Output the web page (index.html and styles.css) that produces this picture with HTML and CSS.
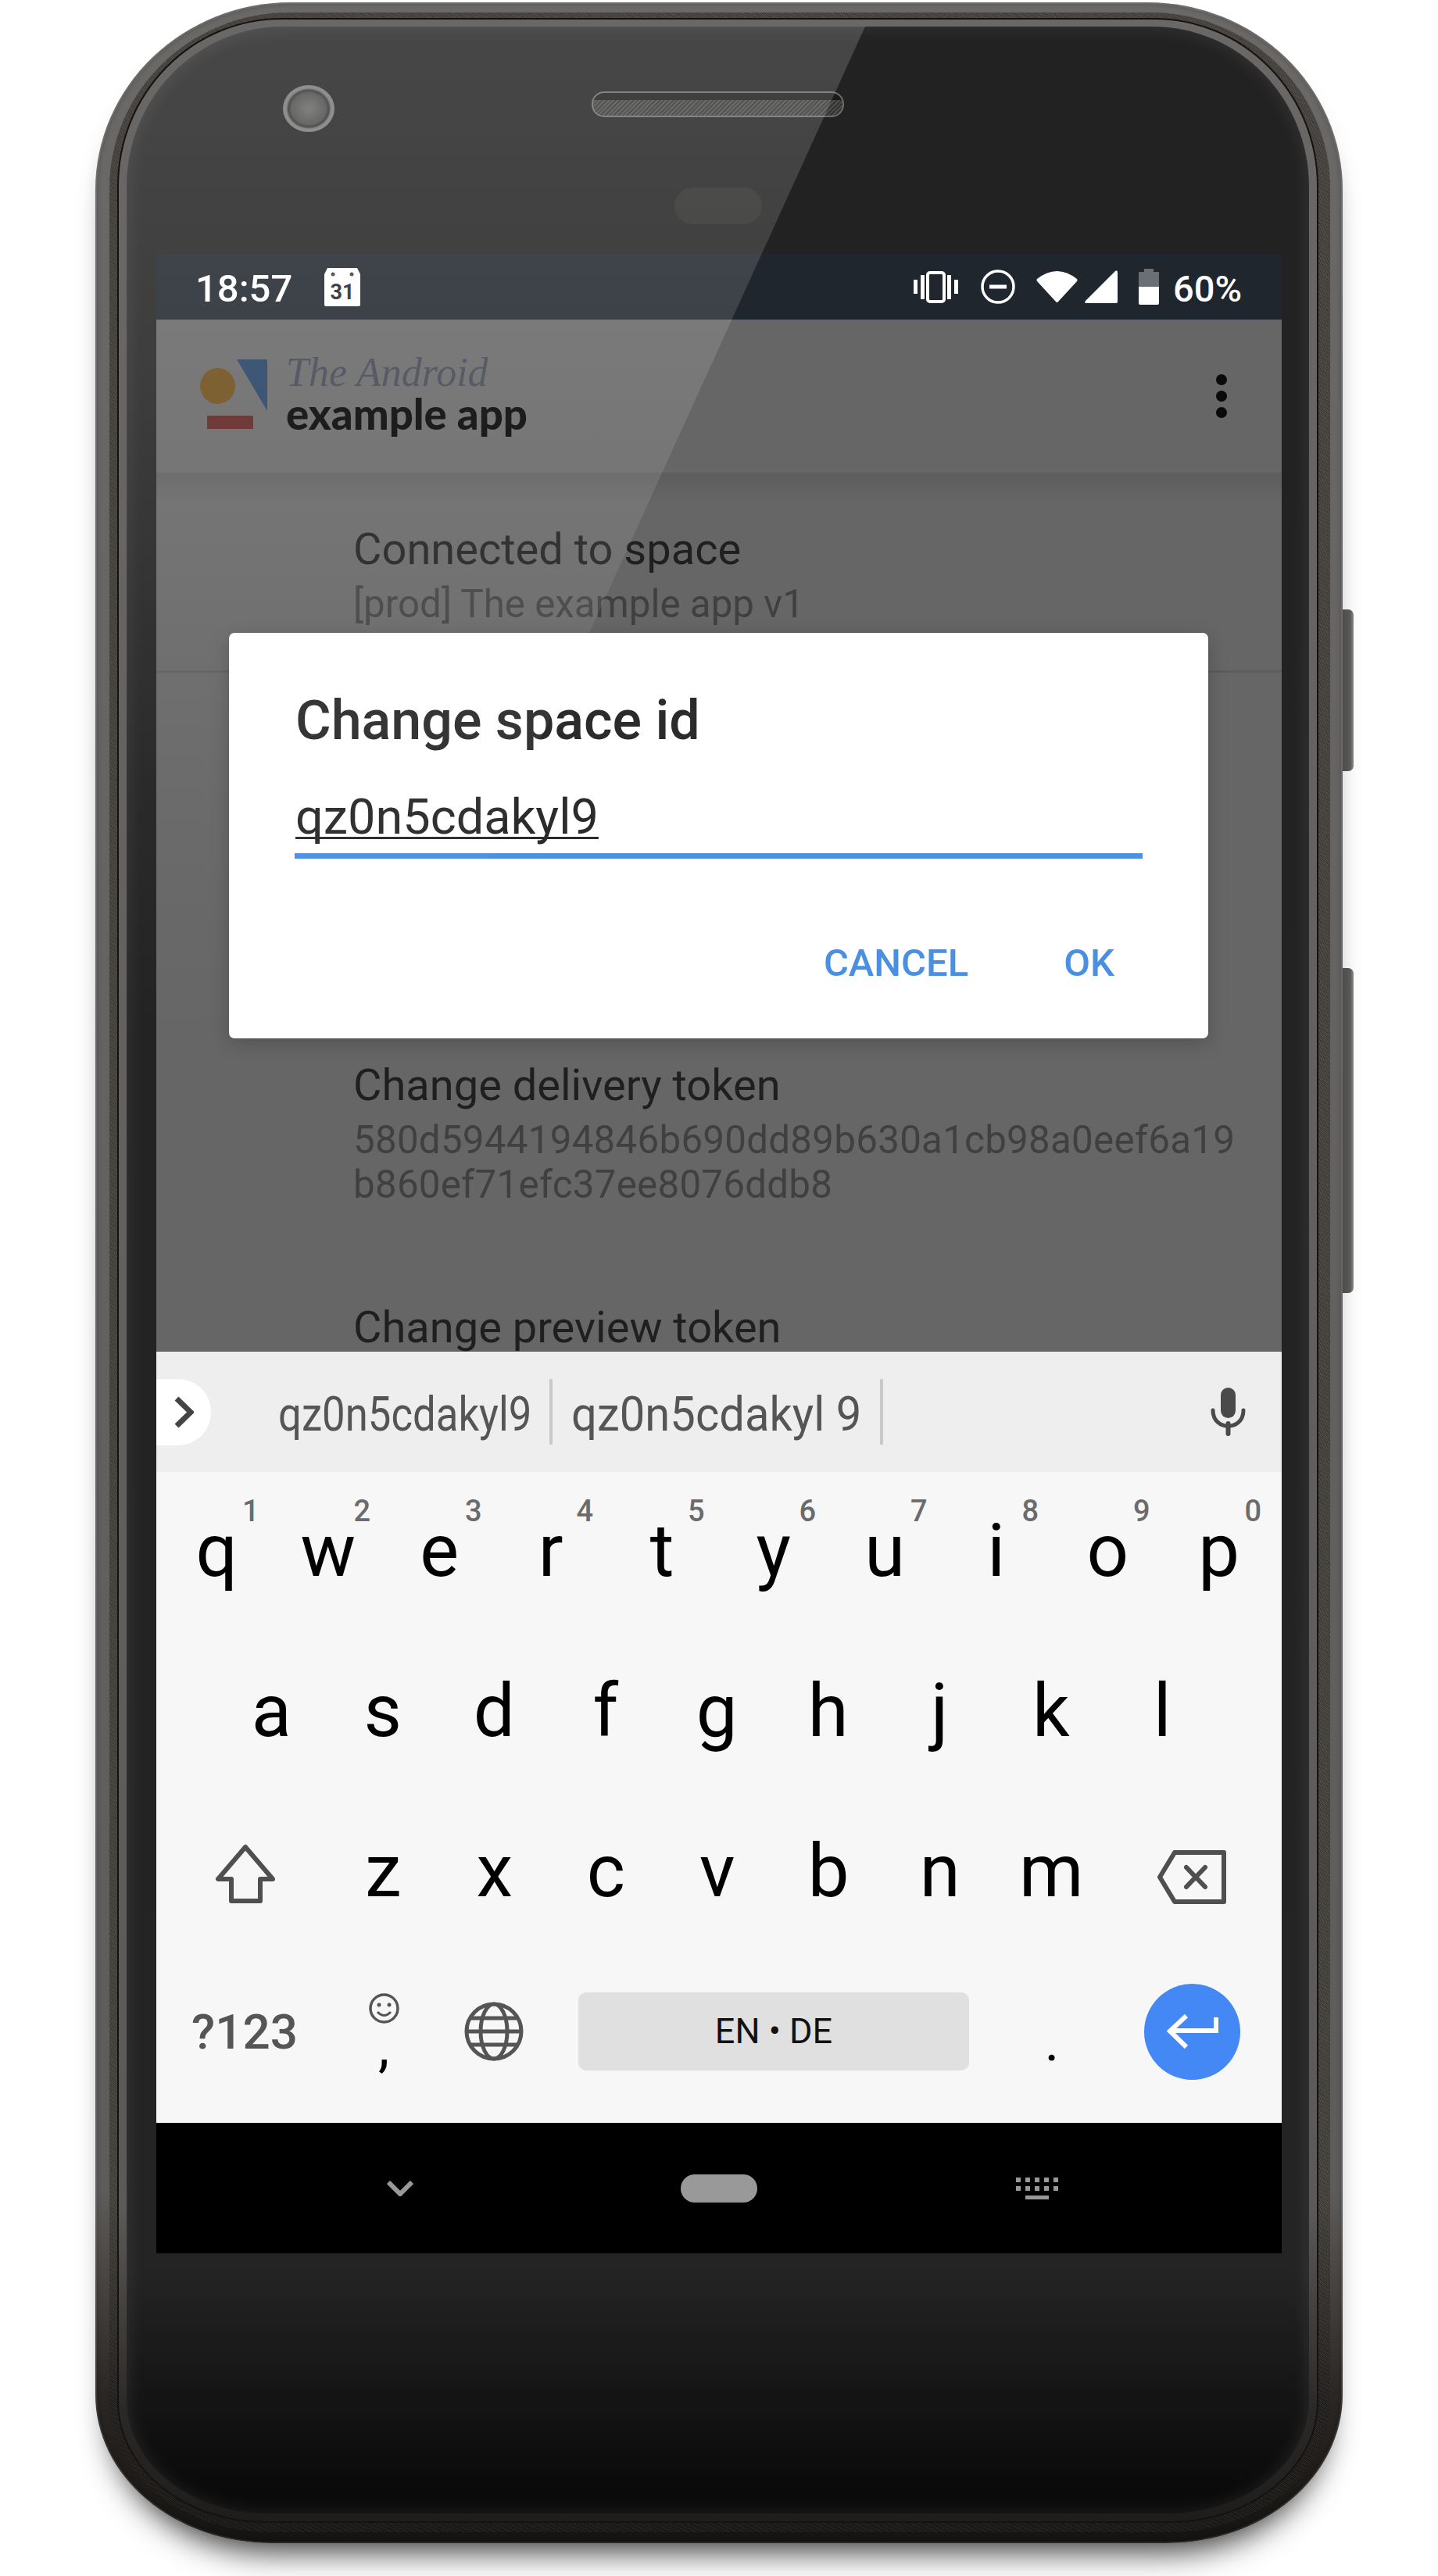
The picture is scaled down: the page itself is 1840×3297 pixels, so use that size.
FILE: index.html
```html
<!DOCTYPE html>
<html lang="en">
<head>
    <meta charset="UTF-8">
    <title>The Android example app</title>
    <link rel="stylesheet" href="styles.css">
</head>
<body>

<div class="device">
    <div class="phone">
        <div class="phone-band">
            <div class="glass-edge">
                <div class="glass-face">

                    <div class="bezel-top">
                        <div class="camera"></div>
                        <div class="bezel-center">
                            <div class="speaker"></div>
                            <div class="sensor"></div>
                        </div>
                    </div>

                    <div class="screen">
                        <div class="status">
                            <span class="time">18:57</span>
                            <svg class="ic-cal" width="46" height="49" viewBox="0 0 46 49">
                                <path d="M4 0H42L46 8V47Q46 49 44 49H2Q0 49 0 47V8Z" fill="#fff"/>
                                <circle cx="11" cy="8" r="2.5" fill="#3d4349"/>
                                <circle cx="35" cy="8" r="2.5" fill="#3d4349"/>
                                <text x="23" y="40" text-anchor="middle" class="cal-num">31</text>
                            </svg>
                            <span class="status-gap"></span>
                            <svg class="ic-vib" width="57" height="41" viewBox="0 0 57 41" fill="#fff">
                                <rect x="18" y="2" width="21" height="37" rx="3" fill="none" stroke="#fff" stroke-width="4"/>
                                <rect x="0" y="11" width="5" height="18"/>
                                <rect x="9" y="5" width="5" height="31"/>
                                <rect x="43" y="5" width="5" height="31"/>
                                <rect x="52" y="11" width="5" height="18"/>
                            </svg>
                            <svg class="ic-dnd" width="44" height="44" viewBox="0 0 44 44">
                                <circle cx="22" cy="22" r="20" fill="none" stroke="#fff" stroke-width="3.5"/>
                                <rect x="11" y="19.5" width="22" height="5" fill="#fff"/>
                            </svg>
                            <svg class="ic-wifi" width="53" height="42" viewBox="0 0 53 42">
                                <path d="M1 11Q26.500 -9 52 11Q53 13 52 14L29 39Q26.500 43 24 39L1 14Q0 12 1 11Z" fill="#fff"/>
                            </svg>
                            <svg class="ic-sig" width="42" height="42" viewBox="0 0 42 42">
                                <path d="M39 1Q42 -1 42 3V40Q42 42 40 42H2Q-1 42 1 39Z" fill="#fff"/>
                            </svg>
                            <svg class="ic-bat" width="26" height="46" viewBox="0 0 26 46">
                                <path d="M7 0H19V4H25Q26 4 26 5V23H0V5Q0 4 1 4H7Z" fill="#6a6f75"/>
                                <path d="M0 23H26V44Q26 46 24 46H2Q0 46 0 44Z" fill="#fff"/>
                            </svg>
                            <span class="battery">60%</span>
                        </div>

                        <div class="appbar">
                            <svg class="logo" width="86" height="89" viewBox="0 0 86 89">
                                <ellipse cx="22.500" cy="34" rx="22.500" ry="23" fill="#6d4c17"/>
                                <path d="M47 0H86V66Z" fill="#244064"/>
                                <rect x="9" y="72" width="59" height="17" fill="#5d221f"/>
                            </svg>
                            <div class="brand">
                                <div class="brand-top">The Android</div>
                                <div class="brand-bottom">example app</div>
                            </div>
                            <span class="spacer"></span>
                            <svg class="overflow" width="14" height="56" viewBox="0 0 14 56" fill="#0a0a0a">
                                <circle cx="7" cy="7" r="7"/>
                                <circle cx="7" cy="28" r="7"/>
                                <circle cx="7" cy="49" r="7"/>
                            </svg>
                        </div>

                        <div class="content">
                            <div class="setting setting-first">
                                <div class="setting-title">Connected to space</div>
                                <div class="setting-sub">[prod] The example app v1</div>
                            </div>
                            <div class="setting setting-token">
                                <div class="setting-title">Change delivery token</div>
                                <div class="setting-sub setting-hex">580d5944194846b690dd89b630a1cb98a0eef6a19<br>b860ef71efc37ee8076ddb8</div>
                            </div>
                            <div class="setting">
                                <div class="setting-title">Change preview token</div>
                            </div>
                        </div>

                        <div class="keyboard">
                            <div class="suggest">
                                <div class="chip">
                                    <svg width="26" height="41" viewBox="0 0 26 41">
                                        <path d="M4 3L22 20.500L4 38" fill="none" stroke="#444" stroke-width="7"/>
                                    </svg>
                                </div>
                                <div class="suggestion first"><span>qz0n5cdakyl9</span></div>
                                <div class="suggestion second"><span>qz0n5cdakyl 9</span></div>
                                <svg class="mic" width="45" height="62" viewBox="0 0 45 62">
                                    <rect x="13" y="0" width="19" height="39" rx="9.500" fill="#4a4a4a"/>
                                    <path d="M3 29C3 56 42 56 42 29" fill="none" stroke="#4a4a4a" stroke-width="5" stroke-linecap="round"/>
                                    <path d="M22.500 46V59" stroke="#4a4a4a" stroke-width="6" stroke-linecap="round"/>
                                </svg>
                            </div>

                            <div class="kb-row kb-row-top">
                                <div class="key">q<i>1</i></div>
                                <div class="key">w<i>2</i></div>
                                <div class="key">e<i>3</i></div>
                                <div class="key">r<i>4</i></div>
                                <div class="key">t<i>5</i></div>
                                <div class="key">y<i>6</i></div>
                                <div class="key">u<i>7</i></div>
                                <div class="key">i<i>8</i></div>
                                <div class="key">o<i>9</i></div>
                                <div class="key">p<i>0</i></div>
                            </div>
                            <div class="kb-row kb-row-home">
                                <div class="key">a</div>
                                <div class="key">s</div>
                                <div class="key">d</div>
                                <div class="key">f</div>
                                <div class="key">g</div>
                                <div class="key">h</div>
                                <div class="key">j</div>
                                <div class="key">k</div>
                                <div class="key">l</div>
                            </div>
                            <div class="kb-row">
                                <div class="key key-wide key-shift">
                                    <svg width="78" height="76" viewBox="0 0 78 76">
                                        <path d="M39 4L4 45H21V73H58V45H74Z" fill="none" stroke="#4f4f4f" stroke-width="6" stroke-linejoin="round"/>
                                    </svg>
                                </div>
                                <div class="key">z</div>
                                <div class="key">x</div>
                                <div class="key">c</div>
                                <div class="key">v</div>
                                <div class="key">b</div>
                                <div class="key">n</div>
                                <div class="key">m</div>
                                <div class="key key-wide key-del">
                                    <svg width="88" height="69" viewBox="0 0 88 69">
                                        <path d="M3 34.500L22 3H85V66H22Z" fill="none" stroke="#4f4f4f" stroke-width="6" stroke-linejoin="round"/>
                                        <path d="M37 22L61 47M61 22L37 47" stroke="#4f4f4f" stroke-width="6" stroke-linecap="round"/>
                                    </svg>
                                </div>
                            </div>
                            <div class="kb-row kb-row-bottom">
                                <div class="key-sym">?123</div>
                                <div class="key-emoji">
                                    <svg width="39" height="39" viewBox="0 0 39 39">
                                        <circle cx="19.500" cy="19.500" r="17.500" fill="none" stroke="#555" stroke-width="3.500"/>
                                        <circle cx="13" cy="15" r="2.500" fill="#555"/>
                                        <circle cx="26" cy="15" r="2.500" fill="#555"/>
                                        <path d="M11 24Q19.500 33 28 24" fill="none" stroke="#555" stroke-width="3"/>
                                    </svg>
                                    <span>,</span>
                                </div>
                                <div class="key-globe">
                                    <svg width="76" height="76" viewBox="0 0 76 76" fill="none" stroke="#555" stroke-width="5">
                                        <circle cx="38" cy="38" r="35"/>
                                        <ellipse cx="38" cy="38" rx="17" ry="35"/>
                                        <path d="M8 21H68M3 38H73M8 55H68"/>
                                    </svg>
                                </div>
                                <div class="key-space">EN • DE</div>
                                <div class="key-dot">.</div>
                                <div class="key-enter">
                                    <svg width="67" height="44" viewBox="0 0 67 44" fill="none" stroke="#fff" stroke-width="6">
                                        <path d="M64 4V21H6"/>
                                        <path d="M26 2L5 21.500L26 42"/>
                                    </svg>
                                </div>
                            </div>
                        </div>

                        <div class="navbar">
                            <svg width="34" height="20" viewBox="0 0 34 20">
                                <path d="M2 2L17 17L32 2" fill="none" stroke="#999" stroke-width="6"/>
                            </svg>
                            <div class="nav-home"></div>
                            <svg width="54" height="28" viewBox="0 0 54 28" fill="#999">
                                <rect x="0" y="0" width="6" height="6"/>
                                <rect x="12" y="0" width="6" height="6"/>
                                <rect x="24" y="0" width="6" height="6"/>
                                <rect x="36" y="0" width="6" height="6"/>
                                <rect x="48" y="0" width="6" height="6"/>
                                <rect x="0" y="11" width="6" height="6"/>
                                <rect x="12" y="11" width="6" height="6"/>
                                <rect x="24" y="11" width="6" height="6"/>
                                <rect x="36" y="11" width="6" height="6"/>
                                <rect x="48" y="11" width="6" height="6"/>
                                <rect x="12" y="23" width="30" height="5"/>
                            </svg>
                        </div>

                        <div class="dialog">
                            <div class="dialog-title">Change space id</div>
                            <div class="dialog-input"><span>qz0n5cdakyl9</span></div>
                            <div class="dialog-actions">
                                <span>CANCEL</span>
                                <span>OK</span>
                            </div>
                        </div>
                    </div>

                    <div class="glare"></div>
                </div>
            </div>
        </div>
    </div>
    <div class="side-buttons">
        <div class="side-btn side-btn-power"></div>
        <div class="side-btn side-btn-volume"></div>
    </div>
</div>

</body>
</html>
```

FILE: styles.css
```css
body {
    margin: 0;
    background-color: #fff;
    font-family: Roboto, sans-serif;
}

/* Phone body, from the outside in */
.device {
    display: flex;
    align-items: flex-start;
    width: 1700px;
    height: 3294px;
    margin-left: 122px;
    padding-top: 3px;
}

.phone {
    width: 1596px;
    height: 3252px;
    box-sizing: border-box;
    padding: 13px 16px 14px 18px;
    border-radius: 250px 250px 225px 225px / 240px 240px 190px 190px;
    background: linear-gradient(#6b6967 0, #5e5c5a 2800px, #2a2724 3060px, #151311 3252px);
    box-shadow: 0 32px 40px -22px rgba(0, 0, 0, 0.8), inset 0 0 0 2px rgba(255, 255, 255, 0.1), inset 0 0 4px 4px rgba(0, 0, 0, 0.12);
}

.phone-band {
    height: 100%;
    box-sizing: border-box;
    padding: 7px 15px 12px 10px;
    border-radius: 230px 230px 205px 205px / 225px 225px 170px 170px;
    background:
        repeating-linear-gradient(63deg, rgba(0, 0, 0, 0.16) 0 1px, transparent 1px 3px),
        repeating-linear-gradient(-37deg, rgba(255, 255, 255, 0.07) 0 1px, transparent 1px 2px),
        linear-gradient(#45423e 0, #43403c 2800px, #201d1b 3060px, #171513 3225px);
}

.glass-edge {
    height: 100%;
    box-sizing: border-box;
    padding: 9px 10px 10px 10px;
    border: 2px solid #141312;
    border-radius: 210px 210px 190px 190px / 215px 215px 155px 155px;
    background: linear-gradient(#6a6866 0, #5c5a58 2800px, #2a2928 3060px, #1e1d1c 3200px);
}

.glass-face {
    position: relative;
    height: 100%;
    overflow: hidden;
    padding-left: 38px;
    border-radius: 200px 200px 180px 180px / 205px 205px 145px 145px;
    background: linear-gradient(#232222 0, #252424 2870px, #0a0a0a 3150px);
    box-shadow: inset 0 0 24px rgba(255, 255, 255, 0.1);
}

.glare {
    position: absolute;
    top: 0;
    left: 0;
    width: 945px;
    height: 2077px;
    clip-path: polygon(0 0, 100% 0, 0 100%);
    background: linear-gradient(rgba(255, 255, 255, 0.17) 0, rgba(255, 255, 255, 0.13) 380px, rgba(255, 255, 255, 0.1) 580px, rgba(255, 255, 255, 0.03) 1000px, rgba(255, 255, 255, 0) 1300px);
    pointer-events: none;
}

.side-buttons {
    display: flex;
    flex-direction: column;
    width: 14px;
    padding-top: 777px;
}

.side-btn {
    border-radius: 0 7px 7px 0;
    background: linear-gradient(90deg, #4e4c4a, #5c5a58 70%, #8b8a88);
}

.side-btn-power {
    height: 207px;
}

.side-btn-volume {
    height: 416px;
    margin-top: 252px;
}

/* Top of the phone */
.bezel-top {
    display: flex;
    align-items: flex-start;
    height: 291px;
}

.camera {
    width: 66px;
    height: 60px;
    margin: 75px 0 0 162px;
    border-radius: 50%;
    background: radial-gradient(ellipse at center, #6a6a68 0, #4b4b4a 48%, #2e2e2e 55%, #7a7a7a 62%, #727272 100%);
}

.bezel-center {
    display: flex;
    flex-direction: column;
    align-items: center;
    margin: 83px 0 0 329px;
}

.speaker {
    width: 323px;
    height: 33px;
    box-sizing: border-box;
    border: 2px solid #6f6d6b;
    border-radius: 16px;
    background: linear-gradient(#1b1b1b 0 30%, transparent 30%), repeating-linear-gradient(135deg, #4e4e4c 0 2px, #343432 2px 4px);
}

.sensor {
    width: 112px;
    height: 47px;
    margin-top: 90px;
    border-radius: 24px;
    background-color: #2c2c2a;
}

/* Screen */
.screen {
    position: relative;
    width: 1440px;
}

.status {
    display: flex;
    align-items: center;
    height: 84px;
    padding: 0 51px 0 50px;
    background-color: #20262e;
    color: #fff;
    font-size: 49px;
    font-weight: 500;
}

.time,
.battery {
    padding-top: 4px;
}

.ic-cal {
    margin-left: 41px;
}

.cal-num {
    font-family: Roboto, sans-serif;
    font-size: 27px;
    font-weight: 700;
    fill: #20262e;
}

.status-gap,
.spacer {
    flex: 1;
}

.ic-dnd {
    margin-left: 29px;
}

.ic-wifi {
    margin-left: 27px;
}

.ic-sig {
    margin-left: 9px;
}

.ic-bat {
    margin-left: 27px;
}

.battery {
    margin-left: 18px;
    font-size: 47px;
    font-weight: 500;
}

.appbar {
    display: flex;
    align-items: center;
    height: 196px;
    padding: 0 70px 0 56px;
    background-color: #666;
}

.logo {
    margin-bottom: 5px;
}

.brand {
    margin: 0 0 8px 24px;
}

.brand-top {
    font-family: "Liberation Serif", serif;
    font-size: 52px;
    font-style: italic;
    line-height: 52px;
    color: #3f4550;
}

.brand-bottom {
    font-family: Lato, sans-serif;
    font-size: 54.500px;
    font-weight: 900;
    line-height: 52px;
    color: #000;
}

.content {
    height: 1125px;
    overflow: hidden;
    padding-left: 252px;
    background: linear-gradient(#5d5d5d 0, #666 40px);
    color: #1f1f1f;
}

.setting {
    padding: 57px 0 58px;
}

.setting-first {
    position: relative;
    padding: 59px 0 59px;
}

.setting-first::after {
    content: "";
    position: absolute;
    left: -252px;
    right: 0;
    bottom: 0;
    height: 3px;
    background-color: #5c5c5c;
}

.setting-first .setting-sub {
    margin-top: 3px;
}

.setting-token {
    margin-top: 432px;
}

.setting-title {
    font-size: 56px;
    line-height: 78px;
    white-space: nowrap;
}

.setting-sub {
    margin-top: 2px;
    font-size: 49.300px;
    line-height: 57px;
    color: #404040;
    white-space: nowrap;
}

.setting-hex {
    padding-top: 1px;
    letter-spacing: 0.25px;
}

/* Dialog over the list */
.dialog {
    position: absolute;
    top: 485px;
    left: 93px;
    width: 1253px;
    height: 519px;
    box-sizing: border-box;
    padding: 70px 84px 0 85px;
    border-radius: 7px;
    background-color: #fff;
    box-shadow: 0 6px 24px rgba(0, 0, 0, 0.2);
    color: #2b2b2b;
}

.dialog-title {
    font-size: 70px;
    font-weight: 500;
    line-height: 84px;
}

.dialog-input {
    margin: 42px 0 0 -1px;
    padding: 0 0 6px 1px;
    border-bottom: 7px solid #4c90e2;
    font-size: 63px;
    line-height: 80px;
}

.dialog-input span {
    text-decoration: underline;
    text-decoration-thickness: 3px;
    text-underline-offset: 4px;
    text-decoration-skip-ink: none;
}

.dialog-actions {
    display: flex;
    justify-content: flex-end;
    gap: 122px;
    margin: 104px 36px 0 0;
    color: #4a90e2;
    font-size: 49px;
    font-weight: 500;
    line-height: 60px;
}

/* Keyboard */
.keyboard {
    height: 987px;
    background-color: #f7f7f7;
}

.suggest {
    display: flex;
    align-items: center;
    height: 154px;
    background-color: #eee;
    color: #555;
    font-size: 62px;
}

.chip {
    display: flex;
    align-items: center;
    justify-content: center;
    width: 70px;
    height: 85px;
    border-radius: 0 42px 42px 0;
    background-color: #fff;
}

.suggestion {
    box-sizing: border-box;
    height: 84px;
    padding-top: 6px;
    line-height: 78px;
    border-right: 4px solid #c9c9c9;
    white-space: nowrap;
}

.suggestion span {
    display: inline-block;
    transform: scaleX(0.85);
    transform-origin: left center;
}

.suggestion.first {
    width: 351px;
    margin-left: 86px;
}

.suggestion.second {
    width: 423px;
    padding-left: 24px;
}

.suggestion.second span {
    transform: scaleX(0.935);
}

.mic {
    margin-left: 419px;
}

.kb-row {
    display: flex;
    height: 205px;
}

.kb-row-top {
    padding-left: 6px;
}

.kb-row-home {
    padding-left: 76px;
}

.key {
    position: relative;
    width: 142.500px;
    height: 203px;
    font-size: 94px;
    line-height: 203px;
    text-align: center;
    color: #000;
}

.key i {
    position: absolute;
    top: 28px;
    left: 104px;
    font-size: 38px;
    font-style: normal;
    font-weight: 500;
    line-height: 44px;
    color: #6b6b6b;
}

.key-wide {
    display: flex;
    align-items: center;
    justify-content: center;
}

.key-shift {
    width: 219px;
}

.key-shift svg {
    margin: 5px 0 0 8px;
}

.key-del {
    width: 216px;
}

.key-del svg {
    margin-top: 14px;
}

.kb-row-bottom {
    align-items: center;
    height: 218px;
    padding-bottom: 16px;
    box-sizing: border-box;
}

.key-sym {
    width: 206px;
    padding-left: 10px;
    text-align: center;
    font-size: 62px;
    font-weight: 500;
    color: #555;
}

.key-emoji {
    display: flex;
    flex-direction: column;
    align-items: center;
    width: 144px;
    padding-left: 6px;
    box-sizing: border-box;
    font-size: 72px;
    line-height: 60px;
    color: #000;
}

.key-globe {
    display: flex;
    justify-content: center;
    width: 144px;
}

.key-space {
    width: 500px;
    height: 100px;
    margin-left: 36px;
    border-radius: 10px;
    background-color: #e0e0e0;
    font-size: 45px;
    line-height: 100px;
    text-align: center;
    color: #111;
}

.key-dot {
    width: 140px;
    margin-left: 36px;
    text-align: center;
    font-size: 70px;
    line-height: 70px;
    padding-top: 26px;
    color: #000;
}

.key-enter {
    display: flex;
    align-items: center;
    justify-content: center;
    width: 123px;
    height: 123px;
    margin-left: 48px;
    border-radius: 50%;
    background-color: #4488f6;
}

.navbar {
    display: flex;
    align-items: center;
    height: 167px;
    padding-left: 295px;
    background-color: #000;
}

.nav-home {
    width: 98px;
    height: 36px;
    margin: 0 331px 0 342px;
    border-radius: 18px;
    background-color: #999;
}
```
